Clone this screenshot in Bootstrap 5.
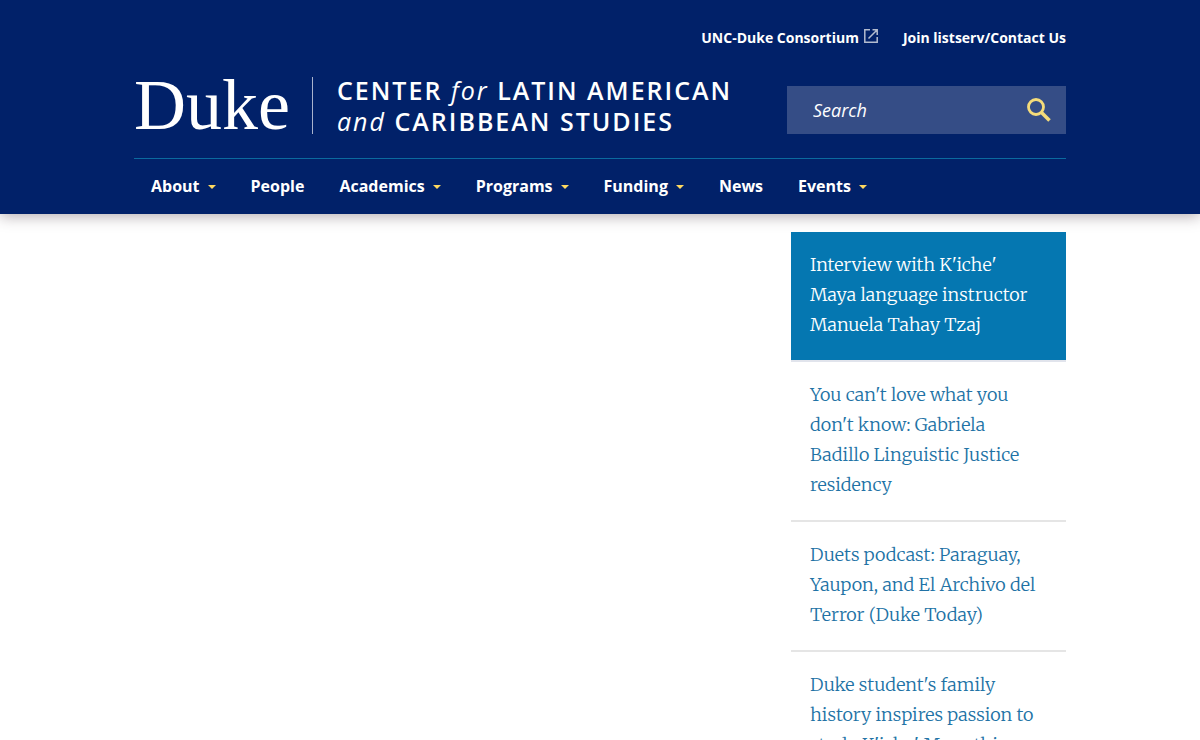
<!DOCTYPE html>
<html lang="en">
<head>
<meta charset="utf-8">
<meta name="viewport" content="width=device-width, initial-scale=1">
<title>Duke Center for Latin American and Caribbean Studies</title>
<link href="https://cdn.jsdelivr.net/npm/bootstrap@5.3.0/dist/css/bootstrap.min.css" rel="stylesheet">
<style>
  body { font-family: "Open Sans", "Noto Sans", sans-serif; background: #fff; }
  .site-width { max-width: 964px; padding: 0 16px; }
  .site-header { background: #012169; box-shadow: 0 2px 14px rgba(60, 40, 50, .4); position: relative; }
  .site-header a { color: #fff; text-decoration: none; }
  .site-header a:hover { text-decoration: underline; }
  .utility-links { font-size: 14px; font-weight: 700; line-height: 20px; gap: 24px; padding-top: 28px; }
  .brand-row { padding: 29px 0 24px; border-bottom: 1px solid #0b6a9f; gap: 16px; }
  .duke-word { font: 72px/57px "Liberation Serif", serif; }
  .center-name { border-left: 1px solid #a9b3cd; margin-left: 22px; padding-left: 24px; font-size: 25px; font-weight: 600; line-height: 31px; height: 57px; letter-spacing: 2px; display: flex; align-items: center; }
  .center-name em { font-weight: 400; }
  .search-box { width: 279px; height: 48px; background: #354d86; }
  .search-box input { background: transparent; border: 0; border-radius: 0; color: #fff; font-size: 18px; font-style: italic; padding: 0 0 0 26px; }
  .search-box input::placeholder { color: #fff; opacity: 1; }
  .search-box input:focus { background: transparent; color: #fff; }
  .search-box button { border: 0; padding: 0 14px 0 0; line-height: 1; }
  .main-nav { gap: 35px; padding: 15px 17px; }
  .main-nav a { font-size: 16px; font-weight: 700; line-height: 25px; padding: 0; display: flex; align-items: center; }
  .main-nav .dropdown-toggle::after { margin-left: 8px; border-top: 4px solid #ffd960; border-left: 4px solid transparent; border-right: 4px solid transparent; }
  .story-list { width: 275px; margin-top: 18px; font: 300 18px/30px Merriweather, "DejaVu Serif", serif; }
  .story-list .list-group-item { border-width: 0 0 2px; border-color: #e5e5e5; padding: 18px 19px 20px; color: #2172a5; }
  .story-list .list-group-item.active { background: #0577b1; color: #fff; border-color: #e1e4ec; margin: 0; background-clip: padding-box; }
</style>
</head>
<body>
<header class="site-header">
  <div class="container-fluid site-width">
    <div class="utility-links d-flex justify-content-end">
      <a href="#" class="d-flex">UNC-Duke Consortium
        <svg class="ms-1" width="16" height="16" viewBox="0 0 16 16" fill="none" stroke="#b3bccf" stroke-width="1.5" aria-hidden="true"><path d="M7 1.8H1.8v12.400h12.400V9M9.500 1.8h4.700V7M14 2L5.500 10.500"/></svg>
      </a>
      <a href="#">Join listserv/Contact Us</a>
    </div>
    <div class="brand-row d-flex align-items-end justify-content-between">
      <a href="#" class="d-flex align-items-center text-nowrap text-decoration-none">
        <span class="duke-word">Duke</span>
        <span class="center-name"><span>CENTER <em>for</em> LATIN AMERICAN<br><em>and</em> CARIBBEAN STUDIES</span></span>
      </a>
      <form class="search-box d-flex" role="search">
        <input class="form-control shadow-none" type="text" placeholder="Search" aria-label="Search">
        <button class="btn" type="button" aria-label="Submit search">
          <svg width="26" height="26" viewBox="0 0 26 26" fill="none" stroke="#f5dc7a" aria-hidden="true"><circle cx="10" cy="10" r="7.500" stroke-width="2.800"/><path d="M15.500 15.500L23.500 23.500" stroke-width="3.600"/></svg>
        </button>
      </form>
    </div>
    <nav aria-label="Main">
      <ul class="main-nav nav">
        <li><a class="dropdown-toggle" href="#">About</a></li>
        <li><a href="#">People</a></li>
        <li><a class="dropdown-toggle" href="#">Academics</a></li>
        <li><a class="dropdown-toggle" href="#">Programs</a></li>
        <li><a class="dropdown-toggle" href="#">Funding</a></li>
        <li><a href="#">News</a></li>
        <li><a class="dropdown-toggle" href="#">Events</a></li>
      </ul>
    </nav>
  </div>
</header>
<main class="container-fluid site-width d-flex justify-content-end">
  <div class="story-list list-group list-group-flush">
    <a href="#" class="list-group-item active" aria-current="true">Interview with K'iche' Maya language instructor Manuela Tahay Tzaj</a>
    <a href="#" class="list-group-item">You can't love what you don't know: Gabriela Badillo Linguistic Justice residency</a>
    <a href="#" class="list-group-item">Duets podcast: Paraguay, Yaupon, and El Archivo del Terror (Duke Today)</a>
    <a href="#" class="list-group-item">Duke student's family history inspires passion to study K'iche' Maya this</a>
  </div>
</main>
<script src="https://cdn.jsdelivr.net/npm/bootstrap@5.3.0/dist/js/bootstrap.bundle.min.js"></script>
</body>
</html>
